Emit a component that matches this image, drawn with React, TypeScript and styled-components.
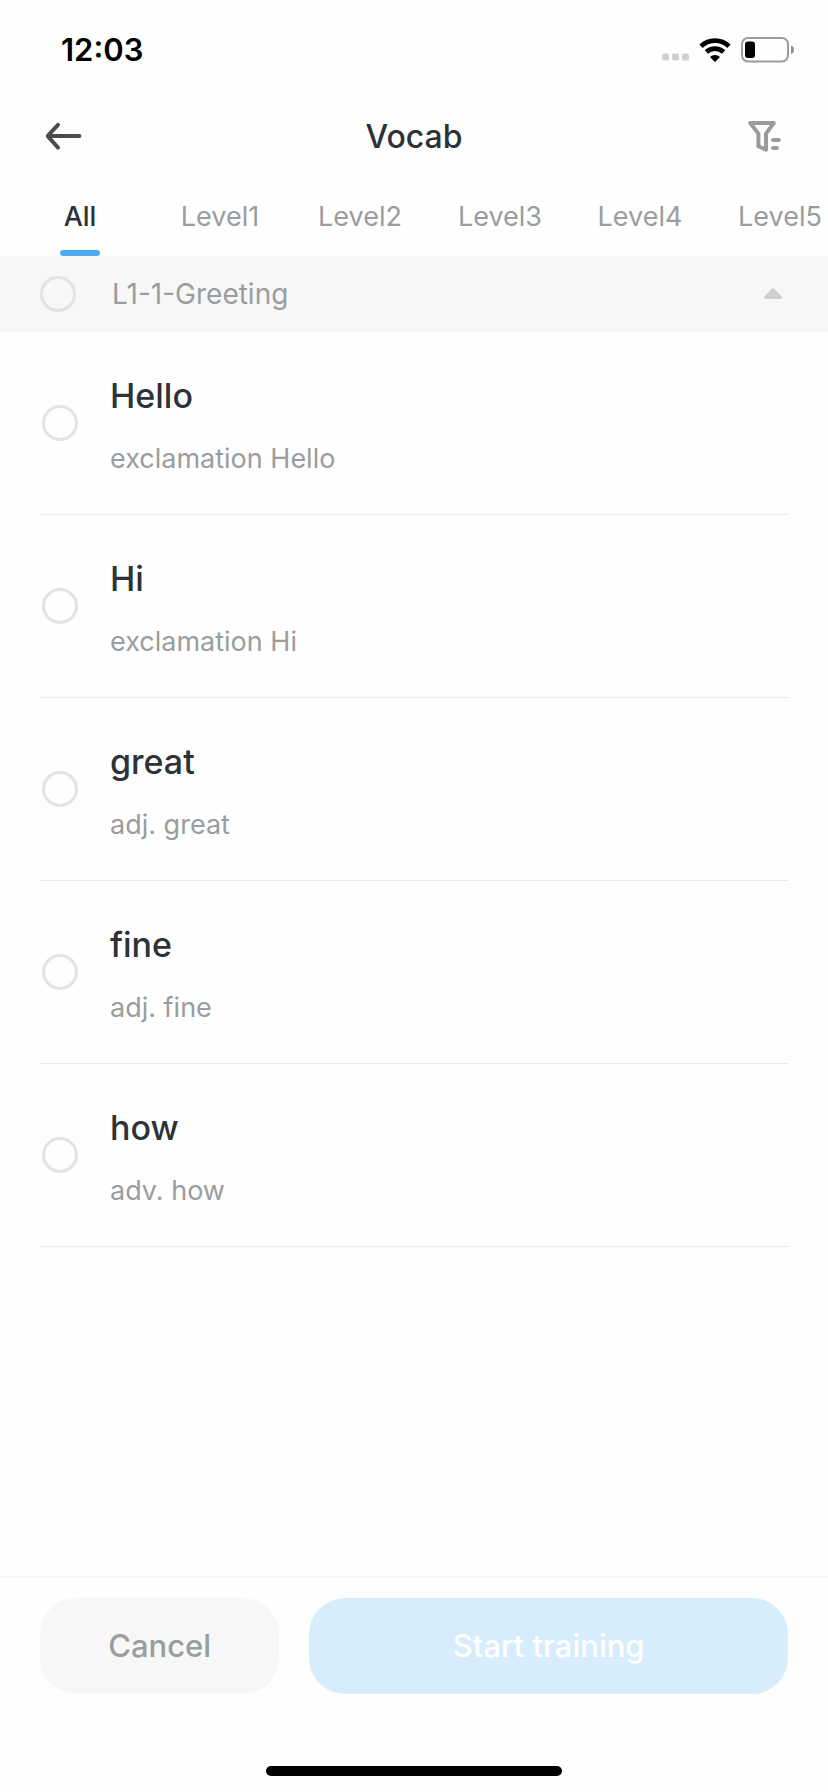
import { useState } from "react";
import styled, { createGlobalStyle } from "styled-components";

const color = {
  ink: "#2d3237",
  muted: "#9a9d9f",
  ring: "#e3e3e3",
  band: "#f7f7f7",
  line: "#ebebeb",
  accent: "#4fabf0",
  accentSoft: "#d7edfc",
};

const GlobalStyle = createGlobalStyle`
  *, *::before, *::after { box-sizing: border-box; }
  body {
    margin: 0;
    background: #fefefe;
    color: ${color.ink};
    font-family: Inter, "Liberation Sans", sans-serif;
  }
  button, input { font: inherit; color: inherit; margin: 0; }
  button { border: 0; padding: 0; background: none; cursor: pointer; }
  svg { display: block; }
`;

const Screen = styled.div`
  min-height: 100vh;
  display: flex;
  flex-direction: column;
`;

const StatusBar = styled.div`
  height: 100px;
  padding: 0 34px 0 61px;
  display: flex;
  align-items: center;
  justify-content: space-between;
`;

const Clock = styled.time`
  font-size: 31px;
  line-height: 40px;
  font-weight: 600;
  color: #000;
`;

const StatusIcons = styled.div`
  display: flex;
  align-items: center;
  gap: 10px;
`;

const Header = styled.header`
  height: 72px;
  padding: 0 40px;
  display: grid;
  grid-template-columns: 48px 1fr 48px;
  align-items: center;
`;

const Title = styled.h1`
  margin: 0;
  padding-top: 2px;
  text-align: center;
  font-size: 32px;
  line-height: 40px;
  font-weight: 500;
`;

const IconButton = styled.button<{ $end?: boolean }>`
  height: 48px;
  display: flex;
  align-items: center;
  justify-content: ${(p) => (p.$end ? "flex-end" : "flex-start")};
`;

const Tabs = styled.nav`
  height: 84px;
  padding-left: 10px;
  display: flex;
  overflow-x: auto;
  scrollbar-width: none;
`;

const Tab = styled.button<{ $active: boolean }>`
  flex: 0 0 140px;
  display: flex;
  flex-direction: column;
  align-items: center;
  justify-content: space-between;
  padding-top: 27px;
  font-size: 27px;
  line-height: 36px;
  font-weight: ${(p) => (p.$active ? 500 : 400)};
  color: ${(p) => (p.$active ? color.ink : color.muted)};

  &::after {
    content: "";
    width: 40px;
    height: 6px;
    border-radius: 3px;
    background: ${(p) => (p.$active ? color.accent : "transparent")};
  }
`;

const SectionBar = styled.div`
  height: 76px;
  padding: 0 46px 0 40px;
  display: flex;
  align-items: center;
  justify-content: space-between;
  background: ${color.band};
`;

const SectionLabel = styled.label`
  display: flex;
  align-items: center;
  gap: 36px;
  font-size: 28px;
  line-height: 36px;
  color: ${color.muted};
`;

const Check = styled.input`
  appearance: none;
  flex: none;
  width: 36px;
  height: 36px;
  border: 3px solid ${color.ring};
  border-radius: 50%;
  cursor: pointer;

  &:checked {
    border-color: ${color.accent};
    background: ${color.accent};
  }
`;

const WordList = styled.ul`
  flex: 1;
  margin: 0;
  padding: 0 40px;
  list-style: none;
`;

const WordRow = styled.li`
  border-bottom: 1px solid ${color.line};
`;

const WordLabel = styled.label`
  display: flex;
  align-items: center;
  gap: 32px;
  padding: 37px 2px;
`;

const WordText = styled.span`
  display: flex;
  flex-direction: column;
  gap: 21px;
  padding-top: 3px;
`;

const Word = styled.span`
  font-size: 34px;
  line-height: 48px;
  font-weight: 500;
`;

const Meaning = styled.span`
  font-size: 27px;
  line-height: 36px;
  color: ${color.muted};
`;

const Footer = styled.footer`
  border-top: 2px solid #f6f6f6;
  padding: 20px 40px 16px;
  display: flex;
  flex-direction: column;
  align-items: center;
  gap: 72px;
`;

const Actions = styled.div`
  align-self: stretch;
  display: flex;
  gap: 30px;
`;

const Action = styled.button<{ $primary?: boolean }>`
  flex: ${(p) => (p.$primary ? 2 : 1)} 1 0;
  height: 96px;
  border-radius: 36px;
  font-size: 31px;
  line-height: 40px;
  font-weight: 500;
  color: ${(p) => (p.$primary ? "#fff" : color.muted)};
  background: ${(p) => (p.$primary ? color.accentSoft : color.band)};
`;

const HomeIndicator = styled.div`
  width: 296px;
  height: 10px;
  border-radius: 5px;
  background: #000;
`;

const SignalDots = () => (
  <svg width="27" height="32" viewBox="0 0 27 32" fill="#d0d0d0" aria-hidden="true">
    <rect x="0" y="19.5" width="7" height="7" rx="2" />
    <rect x="10" y="19.5" width="7" height="7" rx="2" />
    <rect x="20" y="19.5" width="7" height="7" rx="2" />
  </svg>
);

const WifiIcon = () => (
  <svg width="32" height="24" viewBox="0 0 32 24" aria-hidden="true">
    <g fill="none" stroke="#000" strokeWidth="4.8">
      <path d="M2 8.2A20.4 20.4 0 0 1 30 8.2" />
      <path d="M7.4 14A12.6 12.6 0 0 1 24.6 14" />
    </g>
    <path d="M11 19.1A7.2 7.2 0 0 1 21 19.1L16.6 23.5Q16 24 15.4 23.5Z" />
  </svg>
);

const BatteryIcon = () => (
  <svg width="53" height="26" viewBox="0 0 53 26" aria-hidden="true">
    <rect x="1" y="1" width="46" height="23.5" rx="6" fill="none" stroke="#9b9b9b" strokeWidth="2" />
    <path d="M50 8.5Q53 9.6 53 12.8T50 17Z" fill="#8f8f8f" />
    <rect x="4" y="4.5" width="10" height="16.5" rx="3" fill="#000" />
  </svg>
);

const BackIcon = () => (
  <svg width="48" height="32" viewBox="0 0 48 32" fill="none" stroke="#4a4c4f" strokeWidth="4" strokeLinecap="round" strokeLinejoin="round" aria-hidden="true">
    <path d="M8 16H39.4M18 4.8L8.6 14.8Q7.4 16 8.6 17.2L18 27.6" />
  </svg>
);

const FilterIcon = () => (
  <svg width="40" height="32" viewBox="0 0 40 32" fill="none" stroke="#999b9d" strokeWidth="4" strokeLinecap="round" strokeLinejoin="round" aria-hidden="true">
    <path d="M2.2 3H25.8L18 13.6V29.8L10.4 26.2V13.6Z" />
    <path d="M25 20H30.8M25 28H28.8" />
  </svg>
);

const CollapseIcon = ({ open }: { open: boolean }) => (
  <svg width="18" height="12" viewBox="0 0 18 12" fill="#cfcfcf" aria-hidden="true">
    <path
      d="M7.6 0.8Q9 -0.5 10.4 0.8L17.3 8.2Q18.8 11 16 11H2Q-0.8 11 0.7 8.2Z"
      transform={open ? undefined : "rotate(180 9 6)"}
    />
  </svg>
);

const tabs = ["All", "Level1", "Level2", "Level3", "Level4", "Level5"];

const words = [
  { word: "Hello", meaning: "exclamation Hello" },
  { word: "Hi", meaning: "exclamation Hi" },
  { word: "great", meaning: "adj. great" },
  { word: "fine", meaning: "adj. fine" },
  { word: "how", meaning: "adv. how" },
];

export default function App() {
  const [activeTab, setActiveTab] = useState("All");
  const [open, setOpen] = useState(true);
  const [selected, setSelected] = useState<string[]>([]);

  const toggle = (word: string) =>
    setSelected((list) => (list.includes(word) ? list.filter((w) => w !== word) : [...list, word]));
  const allSelected = selected.length === words.length;

  return (
    <>
      <GlobalStyle />
      <Screen>
        <StatusBar>
          <Clock>12:03</Clock>
          <StatusIcons>
            <SignalDots />
            <WifiIcon />
            <BatteryIcon />
          </StatusIcons>
        </StatusBar>
        <Header>
          <IconButton aria-label="Back">
            <BackIcon />
          </IconButton>
          <Title>Vocab</Title>
          <IconButton $end aria-label="Filter">
            <FilterIcon />
          </IconButton>
        </Header>
        <Tabs>
          {tabs.map((tab) => (
            <Tab key={tab} $active={tab === activeTab} onClick={() => setActiveTab(tab)}>
              {tab}
            </Tab>
          ))}
        </Tabs>
        <SectionBar>
          <SectionLabel>
            <Check
              type="checkbox"
              checked={allSelected}
              onChange={() => setSelected(allSelected ? [] : words.map((w) => w.word))}
            />
            L1-1-Greeting
          </SectionLabel>
          <IconButton $end aria-label="Toggle section" aria-expanded={open} onClick={() => setOpen(!open)}>
            <CollapseIcon open={open} />
          </IconButton>
        </SectionBar>
        <WordList>
          {open &&
            words.map(({ word, meaning }) => (
              <WordRow key={word}>
                <WordLabel>
                  <Check type="checkbox" checked={selected.includes(word)} onChange={() => toggle(word)} />
                  <WordText>
                    <Word>{word}</Word>
                    <Meaning>{meaning}</Meaning>
                  </WordText>
                </WordLabel>
              </WordRow>
            ))}
        </WordList>
        <Footer>
          <Actions>
            <Action>Cancel</Action>
            <Action $primary>Start training</Action>
          </Actions>
          <HomeIndicator />
        </Footer>
      </Screen>
    </>
  );
}
